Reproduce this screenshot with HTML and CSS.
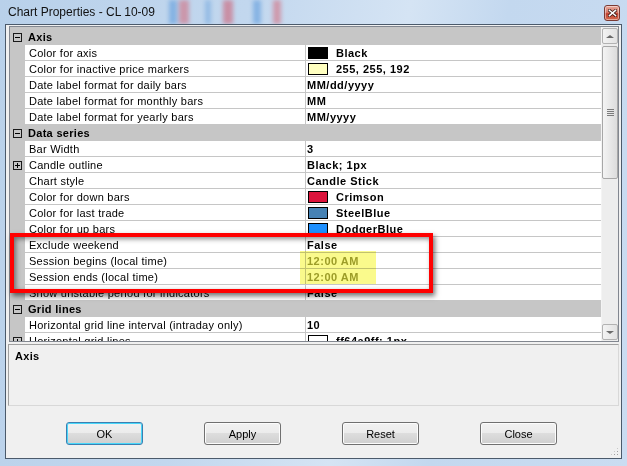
FILE: index.html
```html
<!DOCTYPE html>
<html lang="en">

<head>
    <meta charset="UTF-8">
    <meta name="viewport" content="width=device-width, initial-scale=1.0">
    <title>Chart Properties - CL 10-09</title>
    <link rel="stylesheet" href="styles.css">
</head>

<body>
    <div class="window">
        <div class="titlebar">
            <span class="title">Chart Properties - CL 10-09</span>
            <div class="close-btn">
                <svg width="9" height="8" viewBox="0 0 9 8">
                    <path d="M1.5 1.5 L7.5 6.5 M7.5 1.5 L1.5 6.5" stroke="#3b1a14" stroke-width="3" stroke-linecap="square"/>
                    <path d="M1.5 1.5 L7.5 6.5 M7.5 1.5 L1.5 6.5" stroke="#fff" stroke-width="1.6" stroke-linecap="square"/>
                </svg>
            </div>
        </div>

        <div class="client">
            <div class="propgrid">
                <div class="grid-rows">
                    <div class="cat"><span class="exp"><i class="h"></i></span><span class="cat-name">Axis</span></div>
                    <div class="row"><span class="margin"></span><span class="name">Color for axis</span><span class="value"><i class="swatch sw-black"></i>Black</span></div>
                    <div class="row"><span class="margin"></span><span class="name">Color for inactive price markers</span><span class="value"><i class="swatch sw-cream"></i>255, 255, 192</span></div>
                    <div class="row"><span class="margin"></span><span class="name">Date label format for daily bars</span><span class="value">MM/dd/yyyy</span></div>
                    <div class="row"><span class="margin"></span><span class="name">Date label format for monthly bars</span><span class="value">MM</span></div>
                    <div class="row"><span class="margin"></span><span class="name">Date label format for yearly bars</span><span class="value">MM/yyyy</span></div>

                    <div class="cat"><span class="exp"><i class="h"></i></span><span class="cat-name">Data series</span></div>
                    <div class="row"><span class="margin"></span><span class="name">Bar Width</span><span class="value">3</span></div>
                    <div class="row"><span class="margin"><span class="exp"><i class="h"></i><i class="v"></i></span></span><span class="name">Candle outline</span><span class="value">Black; 1px</span></div>
                    <div class="row"><span class="margin"></span><span class="name">Chart style</span><span class="value">Candle Stick</span></div>
                    <div class="row"><span class="margin"></span><span class="name">Color for down bars</span><span class="value"><i class="swatch sw-crimson"></i>Crimson</span></div>
                    <div class="row"><span class="margin"></span><span class="name">Color for last trade</span><span class="value"><i class="swatch sw-steel"></i>SteelBlue</span></div>
                    <div class="row"><span class="margin"></span><span class="name">Color for up bars</span><span class="value"><i class="swatch sw-dodger"></i>DodgerBlue</span></div>
                    <div class="row"><span class="margin"></span><span class="name">Exclude weekend</span><span class="value">False</span></div>
                    <div class="row"><span class="margin"></span><span class="name">Session begins (local time)</span><span class="value readonly">12:00 AM</span></div>
                    <div class="row"><span class="margin"></span><span class="name">Session ends (local time)</span><span class="value readonly">12:00 AM</span></div>
                    <div class="row"><span class="margin"></span><span class="name">Show unstable period for indicators</span><span class="value">False</span></div>

                    <div class="cat"><span class="exp"><i class="h"></i></span><span class="cat-name">Grid lines</span></div>
                    <div class="row"><span class="margin"></span><span class="name">Horizontal grid line interval (intraday only)</span><span class="value">10</span></div>
                    <div class="row"><span class="margin"><span class="exp"><i class="h"></i><i class="v"></i></span></span><span class="name">Horizontal grid lines</span><span class="value"><i class="swatch sw-dots"></i>ff64a9ff; 1px</span></div>
                </div>

                <div class="vscroll">
                    <div class="sb-btn"><span class="arrow up"></span></div>
                    <div class="sb-thumb"><span class="grip"></span></div>
                    <div class="sb-track"></div>
                    <div class="sb-btn"><span class="arrow down"></span></div>
                </div>

                <!-- marker over the session rows -->
                <div class="mark-yellow"></div>
                <div class="mark-box"></div>
            </div>

            <div class="help">
                <b>Axis</b>
            </div>

            <div class="buttons">
                <button class="btn btn-default">OK</button>
                <button class="btn">Apply</button>
                <button class="btn">Reset</button>
                <button class="btn">Close</button>
            </div>

            <div class="grip-corner"></div>
        </div>
    </div>
</body>

</html>
```

FILE: styles.css
```css
/* Chart properties dialog */
body {
    margin: 0;
    padding: 0;
    font-family: "Liberation Sans", Arial, sans-serif;
    font-size: 11px;
    color: #000;
}

.window {
    position: relative;
    width: 627px;
    height: 466px;
    box-sizing: border-box;
    padding: 0 5px 7px 5px;
    display: flex;
    flex-direction: column;
    overflow: hidden;
    background: linear-gradient(100deg, #b9d1ea 0%, #c2d7ee 35%, #d5e4f4 58%, #c3d8ef 72%, #cadcf1 100%);
}

.titlebar {
    position: relative;
    height: 24px;
    display: flex;
    align-items: center;
}

/* blurred chart behind the glass */
.titlebar::before {
    content: "";
    position: absolute;
    left: 160px;
    top: 0;
    width: 130px;
    height: 24px;
    filter: blur(2px);
    opacity: 0.5;
    background: linear-gradient(90deg,
        transparent 0, transparent 4px,
        #4a8fd8 4px, #4a8fd8 12px,
        transparent 12px, transparent 14px,
        #d65a6a 14px, #d65a6a 24px,
        transparent 24px, transparent 40px,
        #6aa2dc 40px, #6aa2dc 46px,
        transparent 46px, transparent 58px,
        #d04a5e 58px, #d04a5e 68px,
        transparent 68px, transparent 88px,
        #4a8fd8 88px, #4a8fd8 96px,
        transparent 96px, transparent 108px,
        #d65a6a 108px, #d65a6a 116px,
        transparent 116px);
}

.title {
    position: relative;
    margin-left: 3px;
    font-size: 12px;
    color: #111;
}

.close-btn {
    position: relative;
    margin-left: auto;
    margin-right: 2px;
    margin-top: 2px;
    width: 14px;
    height: 14px;
    border: 1px solid #7a3a33;
    border-radius: 3px;
    display: flex;
    align-items: center;
    justify-content: center;
    background: linear-gradient(#e9a99b 0%, #d77c6c 45%, #c0402f 55%, #d56a4e 100%);
    box-shadow: inset 0 0 0 1px rgba(255, 255, 255, 0.45);
}

.client {
    position: relative;
    flex: 1;
    border: 1px solid #4b5a6b;
    background-color: #f0f0f0;
    display: flex;
    flex-direction: column;
}

/* property grid */
.propgrid {
    position: relative;
    height: 316px;
    box-sizing: border-box;
    margin: 1px 2px 0 3px;
    border: 1px solid #828790;
    display: flex;
    background-color: #c6c6c6;
}

.grid-rows {
    flex: 1;
    padding-top: 2px;
    overflow: hidden;
}

.cat {
    position: relative;
    height: 16px;
    display: flex;
    align-items: center;
    background-color: #c6c6c6;
}

.cat .exp {
    margin-left: 3px;
}

.cat-name {
    margin-left: 6px;
    font-weight: bold;
    letter-spacing: 0.3px;
}

.row {
    height: 16px;
    display: flex;
}

.margin {
    width: 15px;
    flex: none;
    display: flex;
    align-items: center;
    background-color: #c6c6c6;
}

.margin .exp {
    margin-left: 3px;
}

.exp {
    position: relative;
    width: 9px;
    height: 9px;
    box-sizing: border-box;
    border: 1px solid #1a1a1a;
    flex: none;
}

.exp .h {
    position: absolute;
    left: 1px;
    top: 3px;
    width: 5px;
    height: 1px;
    background-color: #000;
}

.exp .v {
    position: absolute;
    left: 3px;
    top: 1px;
    width: 1px;
    height: 5px;
    background-color: #000;
}

.name {
    width: 281px;
    height: 16px;
    flex: none;
    box-sizing: border-box;
    padding: 1px 0 0 4px;
    line-height: 15px;
    background-color: #fff;
    border-right: 1px solid #c6c6c6;
    border-bottom: 1px solid #c6c6c6;
    white-space: nowrap;
    overflow: hidden;
    letter-spacing: 0.25px;
}

.value {
    flex: 1;
    display: flex;
    align-items: flex-start;
    height: 16px;
    box-sizing: border-box;
    padding: 1px 0 0 1px;
    line-height: 15px;
    background-color: #fff;
    border-bottom: 1px solid #c6c6c6;
    font-weight: bold;
    letter-spacing: 0.5px;
    white-space: nowrap;
    overflow: hidden;
}

.value.readonly {
    color: #a0a048;
}

.swatch {
    width: 20px;
    height: 12px;
    box-sizing: border-box;
    margin: 1px 8px 0 1px;
    border: 1px solid #000;
    flex: none;
}

.sw-black { background-color: #000; }
.sw-cream { background-color: #ffffc0; }
.sw-crimson { background-color: #dc143c; }
.sw-steel { background-color: #4682b4; }
.sw-dodger { background-color: #1e90ff; }
.sw-dots {
    background: #fff linear-gradient(90deg, #64a9ff 50%, transparent 50%) 2px 7px / 3px 2px repeat-x;
}

/* scrollbar */
.vscroll {
    width: 17px;
    flex: none;
    display: flex;
    flex-direction: column;
    padding: 1px 0;
    box-sizing: border-box;
    background-color: #ededed;
    border-left: 1px solid #f4f4f4;
}

.sb-btn {
    height: 16px;
    box-sizing: border-box;
    border: 1px solid #b2b2b2;
    border-radius: 2px;
    background: linear-gradient(90deg, #f3f3f3, #e2e2e2);
    display: flex;
    align-items: center;
    justify-content: center;
}

.arrow {
    width: 0;
    height: 0;
    border-left: 4px solid transparent;
    border-right: 4px solid transparent;
}

.arrow.up {
    border-bottom: 3px solid #6a6a6a;
}

.arrow.down {
    border-top: 3px solid #6a6a6a;
}

.sb-thumb {
    margin-top: 2px;
    height: 133px;
    box-sizing: border-box;
    border: 1px solid #a7a7a7;
    border-radius: 2px;
    background: linear-gradient(90deg, #f4f4f4, #dcdcdc);
    display: flex;
    align-items: center;
    justify-content: center;
}

.grip {
    width: 7px;
    height: 7px;
    background: linear-gradient(#7b7b7b 1px, transparent 1px) 0 0 / 7px 2px repeat-y;
}

.sb-track {
    flex: 1;
}

.mark-yellow {
    position: absolute;
    left: 290px;
    top: 224px;
    width: 76px;
    height: 33px;
    background-color: #fafa8c;
    mix-blend-mode: multiply;
}

.mark-box {
    position: absolute;
    left: 0;
    top: 206px;
    width: 423px;
    height: 60px;
    box-sizing: border-box;
    border: 4px solid #ff0000;
    box-shadow: 2px 3px 5px rgba(0, 0, 0, 0.55), inset 2px 2px 5px rgba(0, 0, 0, 0.45);
}

/* description pane */
.help {
    height: 62px;
    box-sizing: border-box;
    margin: 2px 2px 0 2px;
    padding: 5px 0 0 6px;
    border: 1px solid #a0a0a0;
    border-right-color: #d8d8d8;
    border-bottom-color: #d8d8d8;
    letter-spacing: 0.3px;
}

.buttons {
    display: flex;
    gap: 61px;
    padding-left: 60px;
    margin-top: 16px;
}

.btn {
    width: 77px;
    height: 23px;
    padding: 0;
    font-family: "Liberation Sans", Arial, sans-serif;
    font-size: 11px;
    color: #000;
    border: 1px solid #707070;
    border-radius: 3px;
    background: linear-gradient(#f2f2f2 0%, #ebebeb 50%, #dddddd 50%, #cfcfcf 100%);
    box-shadow: inset 0 0 0 1px #fcfcfc;
}

.btn-default {
    border-color: #3c7fb1;
    box-shadow: inset 0 0 0 1px #48d7fa;
}

.grip-corner {
    position: absolute;
    right: 2px;
    bottom: 2px;
    width: 9px;
    height: 9px;
    background: radial-gradient(circle, #a0a0a0 0.8px, transparent 1px) 0 0 / 3px 3px;
    clip-path: polygon(100% 0, 100% 100%, 0 100%);
}
```
